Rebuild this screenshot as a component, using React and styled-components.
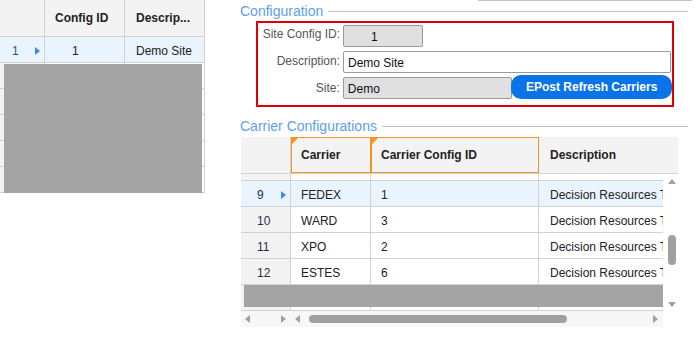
import React from 'react'
import styled, { createGlobalStyle } from 'styled-components'

const GlobalStyle = createGlobalStyle`
  body {
    margin: 0;
    font-family: "Liberation Sans", Arial, sans-serif;
    font-size: 12px;
    color: #222;
    background: #fff;
  }
`

const LINE = '#d2d2d2'
const SEL = '#eaf4fe'
const ORANGE = '#f7941d'

const Page = styled.div`
  display: flex;
  align-items: flex-start;
  width: 696px;
  height: 337px;
  overflow: hidden;
`

/* ---------- grids ---------- */

const SideGrid = styled.div`
  width: 205px;
  flex: none;
`

const HeadRow = styled.div`
  display: flex;
  width: ${(p) => p.$w}px;
  height: 37px;
  box-sizing: border-box;
  background: #f3f3f3;
  border-bottom: 1px solid ${LINE};
  font-weight: bold;
`

const HeadCell = styled.div`
  position: relative;
  flex: ${(p) => (p.$w ? 'none' : 1)};
  width: ${(p) => (p.$w ? `${p.$w}px` : 'auto')};
  box-sizing: border-box;
  display: flex;
  align-items: center;
  padding-left: ${(p) => p.$pl ?? 10}px;
  white-space: nowrap;
  border-right: ${(p) => (p.$last ? 'none' : `1px solid ${LINE}`)};
  ${(p) =>
    p.$sorted &&
    `
    border: 1px solid ${ORANGE};
    padding-left: ${(p.$pl ?? 10) - 1}px;
    &::before {
      content: '';
      position: absolute;
      top: 0;
      left: 0;
      border-top: 6px solid ${ORANGE};
      border-right: 6px solid transparent;
    }
  `}
`

const Body = styled.div`
  position: relative;
`

const Row = styled.div`
  display: flex;
  height: 26px;
  box-sizing: border-box;
  border-bottom: 1px solid ${LINE};
  background: ${(p) => (p.$sel ? SEL : '#fff')};
`

const Cell = styled.div`
  flex: ${(p) => (p.$w ? 'none' : 1)};
  width: ${(p) => (p.$w ? `${p.$w}px` : 'auto')};
  box-sizing: border-box;
  display: flex;
  align-items: center;
  padding: 2px 0 0 ${(p) => p.$pl ?? 10}px;
  white-space: nowrap;
  overflow: hidden;
  border-right: ${(p) => (p.$last ? 'none' : `1px solid ${LINE}`)};
`

const RowHead = styled(Cell)`
  justify-content: space-between;
  padding-right: 4px;
  color: ${(p) => p.$ink || '#24528f'};
  background: ${(p) => (p.$sel ? SEL : '#f3f3f3')};
`

const Caret = styled.span`
  width: 0;
  height: 0;
  border-left: 5px solid #3d8ee0;
  border-top: 4px solid transparent;
  border-bottom: 4px solid transparent;
`

const Overlay = styled.div`
  position: absolute;
  top: ${(p) => p.$top}px;
  left: ${(p) => p.$left}px;
  width: ${(p) => p.$w}px;
  height: ${(p) => p.$h}px;
  background: #a4a4a4;
`

/* ---------- right panel ---------- */

const Panel = styled.div`
  margin-left: 33px;
  width: 452px;
  flex: none;
`

const TopRule = styled.div`
  margin-left: 240px;
  width: 214px;
  border-top: 1px solid #c4c4c4;
`

const Legend = styled.div`
  display: flex;
  align-items: center;
  height: 16px;
  margin-top: ${(p) => p.$mt}px;
  padding-left: 2px;
  font-size: 14px;
  color: #5f9ef0;

  &::after {
    content: '';
    flex: 1;
    margin: 1px 2px 0 5px;
    border-top: 1px solid #c4c4c4;
  }
`

const ConfigBox = styled.div`
  margin: 2px 0 0 18px;
  width: 418px;
  height: 86px;
  box-sizing: border-box;
  border: 2px solid #e00000;
  padding-top: 2px;
  display: flex;
  flex-direction: column;
  gap: 4px;
`

const FormRow = styled.div`
  display: flex;
  align-items: ${(p) => (p.$end ? 'flex-end' : 'center')};
  gap: 3px;
  margin-top: ${(p) => p.$mt || 0}px;
`

const Label = styled.div`
  width: 82px;
  text-align: right;
  color: #555;
  align-self: center;
  margin-top: ${(p) => p.$mt || 0}px;
`

const Field = styled.div`
  width: ${(p) => p.$w}px;
  height: 22px;
  box-sizing: border-box;
  display: flex;
  align-items: center;
  padding: 1px 0 0 ${(p) => p.$pl ?? 4}px;
  border: 1px solid #9a9a9a;
  border-radius: 2px;
  background: ${(p) => (p.$ro ? '#e0e0e0' : '#fff')};
  color: #111;
`

const RefreshButton = styled.button`
  margin-left: -4px;
  width: 161px;
  height: 24px;
  border: none;
  border-radius: 10px;
  background: #0b73e8;
  color: #fff;
  font: bold 12px "Liberation Sans", Arial, sans-serif;
  padding: 0;
`

/* ---------- carrier grid ---------- */

const CarrierGrid = styled.div`
  margin: 3px 0 0 3px;
  width: 439px;
`

const BodyWrap = styled.div`
  display: flex;
  height: 137px;
`

const RowsPane = styled.div`
  position: relative;
  width: 422px;
  overflow: hidden;
`

const RowsTrack = styled.div`
  margin-top: -19px;
`

const VScroll = styled.div`
  width: 17px;
  display: flex;
  flex-direction: column;
  align-items: center;
  padding-top: 5px;
`

const UpArrow = styled.span`
  border-left: 4px solid transparent;
  border-right: 4px solid transparent;
  border-bottom: 5px solid #a0a0a0;
`

const DownArrow = styled.span`
  margin-top: 37px;
  border-left: 4px solid transparent;
  border-right: 4px solid transparent;
  border-top: 5px solid #a0a0a0;
`

const VThumb = styled.div`
  margin-top: 51px;
  width: 8px;
  height: 30px;
  border-radius: 4px;
  background: #a0a0a0;
`

const HScroll = styled.div`
  display: flex;
  width: 422px;
  height: 16px;
  background: #f7f7f7;
`

const HPart = styled.div`
  display: flex;
  align-items: center;
  width: ${(p) => (p.$w ? `${p.$w}px` : 'auto')};
  flex: ${(p) => (p.$w ? 'none' : 1)};
  padding: 0 5px 0 4px;
  box-sizing: border-box;
  justify-content: ${(p) => (p.$spread ? 'space-between' : 'flex-start')};
`

const LeftArrow = styled.span`
  border-top: 4px solid transparent;
  border-bottom: 4px solid transparent;
  border-right: 5px solid #a0a0a0;
`

const RightArrow = styled.span`
  margin-left: ${(p) => (p.$auto ? 'auto' : 0)};
  border-top: 4px solid transparent;
  border-bottom: 4px solid transparent;
  border-left: 5px solid #a0a0a0;
`

const HThumb = styled.div`
  margin-left: 9px;
  width: 258px;
  height: 8px;
  border-radius: 4px;
  background: #a0a0a0;
`

const carriers = [
  { n: 8, carrier: '', id: '', desc: '' },
  { n: 9, carrier: 'FEDEX', id: '1', desc: 'Decision Resources Test', sel: true },
  { n: 10, carrier: 'WARD', id: '3', desc: 'Decision Resources Test' },
  { n: 11, carrier: 'XPO', id: '2', desc: 'Decision Resources Test' },
  { n: 12, carrier: 'ESTES', id: '6', desc: 'Decision Resources Test' },
  { n: 13, carrier: '', id: '', desc: '' },
]

const App = () => {
  return (
    <Page>
      <GlobalStyle />

      <SideGrid>
        <HeadRow $w={205}>
          <HeadCell $w={45} />
          <HeadCell $w={80}>Config ID</HeadCell>
          <HeadCell $w={80} $pl={11}>Descrip...</HeadCell>
        </HeadRow>
        <Body>
          <Row $sel>
            <RowHead $w={45} $pl={12} $sel>
              1<Caret />
            </RowHead>
            <Cell $w={80} $pl={27}>1</Cell>
            <Cell $w={80} $pl={11}>Demo Site</Cell>
          </Row>
          {[2, 3, 4, 5, 6].map((n) => (
            <Row key={n}>
              <RowHead $w={45} />
              <Cell $w={80} />
              <Cell $w={80} />
            </Row>
          ))}
          <Overlay $top={27} $left={4} $w={198} $h={129} />
        </Body>
      </SideGrid>

      <Panel>
        <TopRule />
        <Legend $mt={2}>Configuration</Legend>
        <ConfigBox>
          <FormRow>
            <Label $mt={-4}>Site Config ID:</Label>
            <Field $w={80} $pl={27} $ro>1</Field>
          </FormRow>
          <FormRow>
            <Label $mt={-3}>Description:</Label>
            <Field $w={328}>Demo Site</Field>
          </FormRow>
          <FormRow $end $mt={-2}>
            <Label $mt={2}>Site:</Label>
            <Field $w={170} $ro>Demo</Field>
            <RefreshButton>EPost Refresh Carriers</RefreshButton>
          </FormRow>
        </ConfigBox>

        <Legend $mt={11}>Carrier Configurations</Legend>
        <CarrierGrid>
          <HeadRow $w={437}>
            <HeadCell $w={50} />
            <HeadCell $w={80} $sorted>Carrier</HeadCell>
            <HeadCell $w={168} $sorted>Carrier Config ID</HeadCell>
            <HeadCell $pl={11} $last>Description</HeadCell>
          </HeadRow>
          <BodyWrap>
            <RowsPane>
              <RowsTrack>
                {carriers.map((r) => (
                  <Row key={r.n} $sel={r.sel}>
                    <RowHead $w={50} $pl={16} $sel={r.sel} $ink="#1f2f48">
                      {r.carrier ? r.n : ''}
                      {r.sel && <Caret />}
                    </RowHead>
                    <Cell $w={80}>{r.carrier}</Cell>
                    <Cell $w={168}>{r.id}</Cell>
                    <Cell $pl={11} $last>{r.desc}</Cell>
                  </Row>
                ))}
              </RowsTrack>
              <Overlay $top={111} $left={3} $w={419} $h={22} />
            </RowsPane>
            <VScroll>
              <UpArrow />
              <VThumb />
              <DownArrow />
            </VScroll>
          </BodyWrap>
          <HScroll>
            <HPart $w={50} $spread>
              <LeftArrow />
              <RightArrow />
            </HPart>
            <HPart>
              <LeftArrow />
              <HThumb />
              <RightArrow $auto />
            </HPart>
          </HScroll>
        </CarrierGrid>
      </Panel>
    </Page>
  )
}

export default App
